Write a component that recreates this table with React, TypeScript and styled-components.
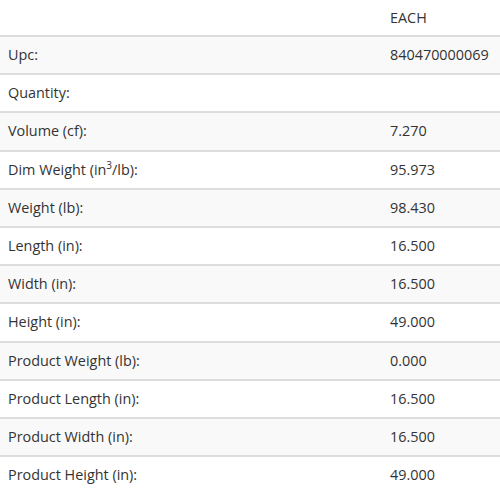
import React from "react";
import styled, { createGlobalStyle } from "styled-components";

const GlobalStyle = createGlobalStyle`
  html, body {
    margin: 0;
    padding: 0;
    background: #ffffff;
  }
  body {
    font-family: "Open Sans", "Noto Sans", sans-serif;
    font-size: 14.4px;
    color: #333333;
  }
`;

const Table = styled.table`
  width: 500px;
  border-collapse: collapse;
  border-spacing: 0;
`;

const HeadCell = styled.th`
  height: 35px;
  padding: 0 8px;
  text-align: left;
  font-weight: normal;
  vertical-align: middle;
`;

const Row = styled.tr<{ $striped: boolean }>`
  background: ${(p) => (p.$striped ? "#f9f9f9" : "#ffffff")};
  border-top: 2px solid #dddddd;
`;

const Cell = styled.td`
  height: 36.2px;
  padding: 0 8px;
  line-height: 20px;
  vertical-align: middle;
`;

const LabelCell = styled(Cell)`
  width: 366px;
`;

const Sup = styled.sup`
  font-size: 10px;
  line-height: 0;
  vertical-align: 0;
  position: relative;
  top: -6px;
`;

const rows: [React.ReactNode, string][] = [
  ["Upc:", "840470000069"],
  ["Quantity:", ""],
  ["Volume (cf):", "7.270"],
  [
    <>
      Dim Weight (in<Sup>3</Sup>/lb):
    </>,
    "95.973",
  ],
  ["Weight (lb):", "98.430"],
  ["Length (in):", "16.500"],
  ["Width (in):", "16.500"],
  ["Height (in):", "49.000"],
  ["Product Weight (lb):", "0.000"],
  ["Product Length (in):", "16.500"],
  ["Product Width (in):", "16.500"],
  ["Product Height (in):", "49.000"],
];

const App: React.FC = () => {
  return (
    <>
      <GlobalStyle />
      <Table>
        <thead>
          <tr>
            <HeadCell />
            <HeadCell>EACH</HeadCell>
          </tr>
        </thead>
        <tbody>
          {rows.map(([label, value], i) => (
            <Row key={i} $striped={i % 2 === 0}>
              <LabelCell>{label}</LabelCell>
              <Cell>{value}</Cell>
            </Row>
          ))}
        </tbody>
      </Table>
    </>
  );
};

export default App;
